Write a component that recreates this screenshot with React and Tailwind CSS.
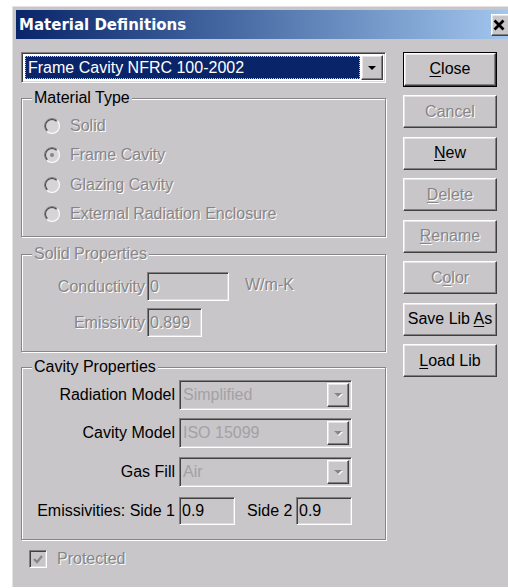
const face = 'bg-[#c8c6c9]';
const sunken =
  'border border-t-[#808080] border-l-[#808080] border-b-white border-r-white shadow-[inset_1px_1px_0_#404040,inset_-1px_-1px_0_#dcdadc]';
const raised =
  'border border-t-white border-l-white border-b-[#404040] border-r-[#404040] shadow-[inset_-1px_-1px_0_#808080,inset_1px_1px_0_#e6e4e6]';
const dimText = 'text-[#878588] [text-shadow:1px_1px_0_#fff]';

function Arrow({ disabled }) {
  return (
    <svg width="10" height="6" viewBox="0 0 10 6" className="block">
      {disabled && <path d="M2 2h8l-4 4z" fill="#fff" />}
      <path d="M1 1h8l-4 4z" fill={disabled ? '#878588' : '#000'} />
    </svg>
  );
}

function DropButton({ disabled }) {
  return (
    <div className={`w-[22px] h-full flex items-center justify-center ${face} ${raised}`}>
      <Arrow disabled={disabled} />
    </div>
  );
}

function Group({ title, disabled, className = '', children }) {
  return (
    <div
      className={`relative border border-[#878588] shadow-[1px_1px_0_#fff,inset_1px_1px_0_#fff] ${className}`}
    >
      <span
        className={`absolute left-[10px] top-[-10px] px-[2px] leading-[18px] ${face} ${
          disabled ? dimText : 'text-black'
        }`}
      >
        {title}
      </span>
      {children}
    </div>
  );
}

function Radio({ label, checked }) {
  return (
    <div className="flex items-center h-[29.5px]">
      <svg width="16" height="16" viewBox="0 0 16 16" className="shrink-0">
        <circle cx="8" cy="8" r="8" fill="#fff" />
        <path d="M2.34 13.66A8 8 0 0 1 13.66 2.34Z" fill="#808080" />
        <circle cx="8" cy="8" r="7" fill="#dcdadc" />
        <path d="M3.05 12.95A7 7 0 0 1 12.95 3.05Z" fill="#404040" />
        <circle cx="8" cy="8" r="6" fill="#d6d4d6" />
        {checked && <circle cx="8" cy="8" r="2" fill="#878588" />}
      </svg>
      <span className={`ml-[10px] ${dimText}`}>{label}</span>
    </div>
  );
}

function Field({ value, width, disabled }) {
  return (
    <div
      className={`h-full flex items-center pl-[2px] ${face} ${sunken} ${width} ${
        disabled ? dimText : 'text-black'
      }`}
    >
      {value}
    </div>
  );
}

function Combo({ value }) {
  return (
    <div className={`w-[173px] h-full flex items-center ${face} ${sunken} p-[2px]`}>
      <span className="flex-1 pl-[1px] text-[#a3a1a4]">{value}</span>
      <DropButton disabled />
    </div>
  );
}

function Button({ children, disabled }) {
  return (
    <div
      className={`h-[33px] w-[94px] flex items-center justify-center ${face} ${raised} ${
        disabled ? dimText : 'text-black'
      }`}
    >
      <span className="whitespace-pre">{children}</span>
    </div>
  );
}

const U = ({ children }) => <u className="underline underline-offset-[2px]">{children}</u>;

export default function App() {
  return (
    <div className="w-[508px] h-[588px] bg-white overflow-hidden font-['Liberation_Sans',Arial,sans-serif] text-[16px] leading-[18px]">
      <div className={`ml-[12px] mt-[6px] w-[510px] h-[581px] ${face} border-t border-l border-[#e4e2e4] pl-[3px] pr-[3px] pt-[3px]`}>
        {/* caption bar */}
        <div className="h-[29px] flex items-center bg-linear-to-r from-[#0a246a] to-[#a6caf0]">
          <span className="pl-[3px] text-white font-bold font-['DejaVu_Sans',sans-serif] text-[15px]">
            Material Definitions
          </span>
          <div className={`ml-auto mr-[8px] w-[20px] h-[22px] flex items-center pl-[1px] ${face} ${raised}`}>
            <svg width="12" height="12" viewBox="0 0 12 12">
              <path d="M1.5 1.5l9 9M10.5 1.5l-9 9" stroke="#000" strokeWidth="2.8" />
            </svg>
          </div>
        </div>

        <div className="flex pt-[13px] pl-[5px]">
          <div className="w-[365px] flex flex-col">
            {/* material picker */}
            <div className={`h-[31px] flex items-center p-[2px] bg-white ${sunken}`}>
              <div className="flex-1 h-full p-[1px]">
                <div className="h-full bg-[#0a246a] outline outline-1 outline-dotted outline-[#d8d060] -outline-offset-1 flex items-center pl-[3px] text-white">
                  Frame Cavity NFRC 100-2002
                </div>
              </div>
              <DropButton />
            </div>

            <Group title="Material Type" className="mt-[15px] h-[139px]">
              <div className="pt-[12px] pl-[22px]">
                <Radio label="Solid" />
                <Radio label="Frame Cavity" checked />
                <Radio label="Glazing Cavity" />
                <Radio label="External Radiation Enclosure" />
              </div>
            </Group>

            <Group title="Solid Properties" disabled className="mt-[17px] h-[98px]">
              <div className="pt-[17px] flex flex-col gap-[7px]">
                <div className="flex items-center h-[29px]">
                  <span className={`w-[123px] text-right ${dimText}`}>Conductivity</span>
                  <div className="ml-[2px] h-full">
                    <Field value="0" width="w-[82px]" disabled />
                  </div>
                  <span className={`ml-[16px] -mt-[3px] ${dimText}`}>W/m-K</span>
                </div>
                <div className="flex items-center h-[29px]">
                  <span className={`w-[123px] text-right ${dimText}`}>Emissivity</span>
                  <div className="ml-[2px] h-full">
                    <Field value="0.899" width="w-[55px]" disabled />
                  </div>
                </div>
              </div>
            </Group>

            <Group title="Cavity Properties" className="mt-[15px] h-[173px]">
              <div className="flex flex-col">
                <div className="mt-[12px] h-[30px] flex items-center">
                  <span className="w-[153px] text-right">Radiation Model</span>
                  <div className="ml-[4px] h-full">
                    <Combo value="Simplified" />
                  </div>
                </div>
                <div className="mt-[8px] h-[30px] flex items-center">
                  <span className="w-[153px] text-right">Cavity Model</span>
                  <div className="ml-[4px] h-full">
                    <Combo value="ISO 15099" />
                  </div>
                </div>
                <div className="mt-[9px] h-[30px] flex items-center">
                  <span className="w-[153px] text-right">Gas Fill</span>
                  <div className="ml-[4px] h-full">
                    <Combo value="Air" />
                  </div>
                </div>
                <div className="mt-[10px] h-[28px] flex items-center">
                  <span className="w-[153px] text-right">Emissivities: Side 1</span>
                  <div className="ml-[4px] h-full">
                    <Field value="0.9" width="w-[56px]" />
                  </div>
                  <span className="ml-[12px] w-[49px]">Side 2</span>
                  <div className="h-full">
                    <Field value="0.9" width="w-[56px]" />
                  </div>
                </div>
              </div>
            </Group>

            <div className="mt-[10px] pl-[8px] h-[18px] flex items-center">
              <div className={`w-[18px] h-[18px] flex items-center justify-center ${face} ${sunken}`}>
                <svg width="10" height="9" viewBox="0 0 10 9">
                  <path d="M1 4l3 3 5-6" fill="none" stroke="#878588" strokeWidth="2.2" />
                </svg>
              </div>
              <span className={`ml-[10px] ${dimText}`}>Protected</span>
            </div>
          </div>

          {/* command buttons */}
          <div className="ml-[17px] w-[94px] flex flex-col gap-[8.5px]">
            <div className="h-[34.5px] border border-black flex">
              <div className={`flex-1 flex items-center justify-center text-black ${face} ${raised}`}>
                <span><U>C</U>lose</span>
              </div>
            </div>
            <Button disabled>Cancel</Button>
            <Button><U>N</U>ew</Button>
            <Button disabled><U>D</U>elete</Button>
            <Button disabled><U>R</U>ename</Button>
            <Button disabled>C<U>o</U>lor</Button>
            <Button>Save Lib <U>A</U>s</Button>
            <Button><U>L</U>oad Lib</Button>
          </div>
        </div>
      </div>
    </div>
  );
}
